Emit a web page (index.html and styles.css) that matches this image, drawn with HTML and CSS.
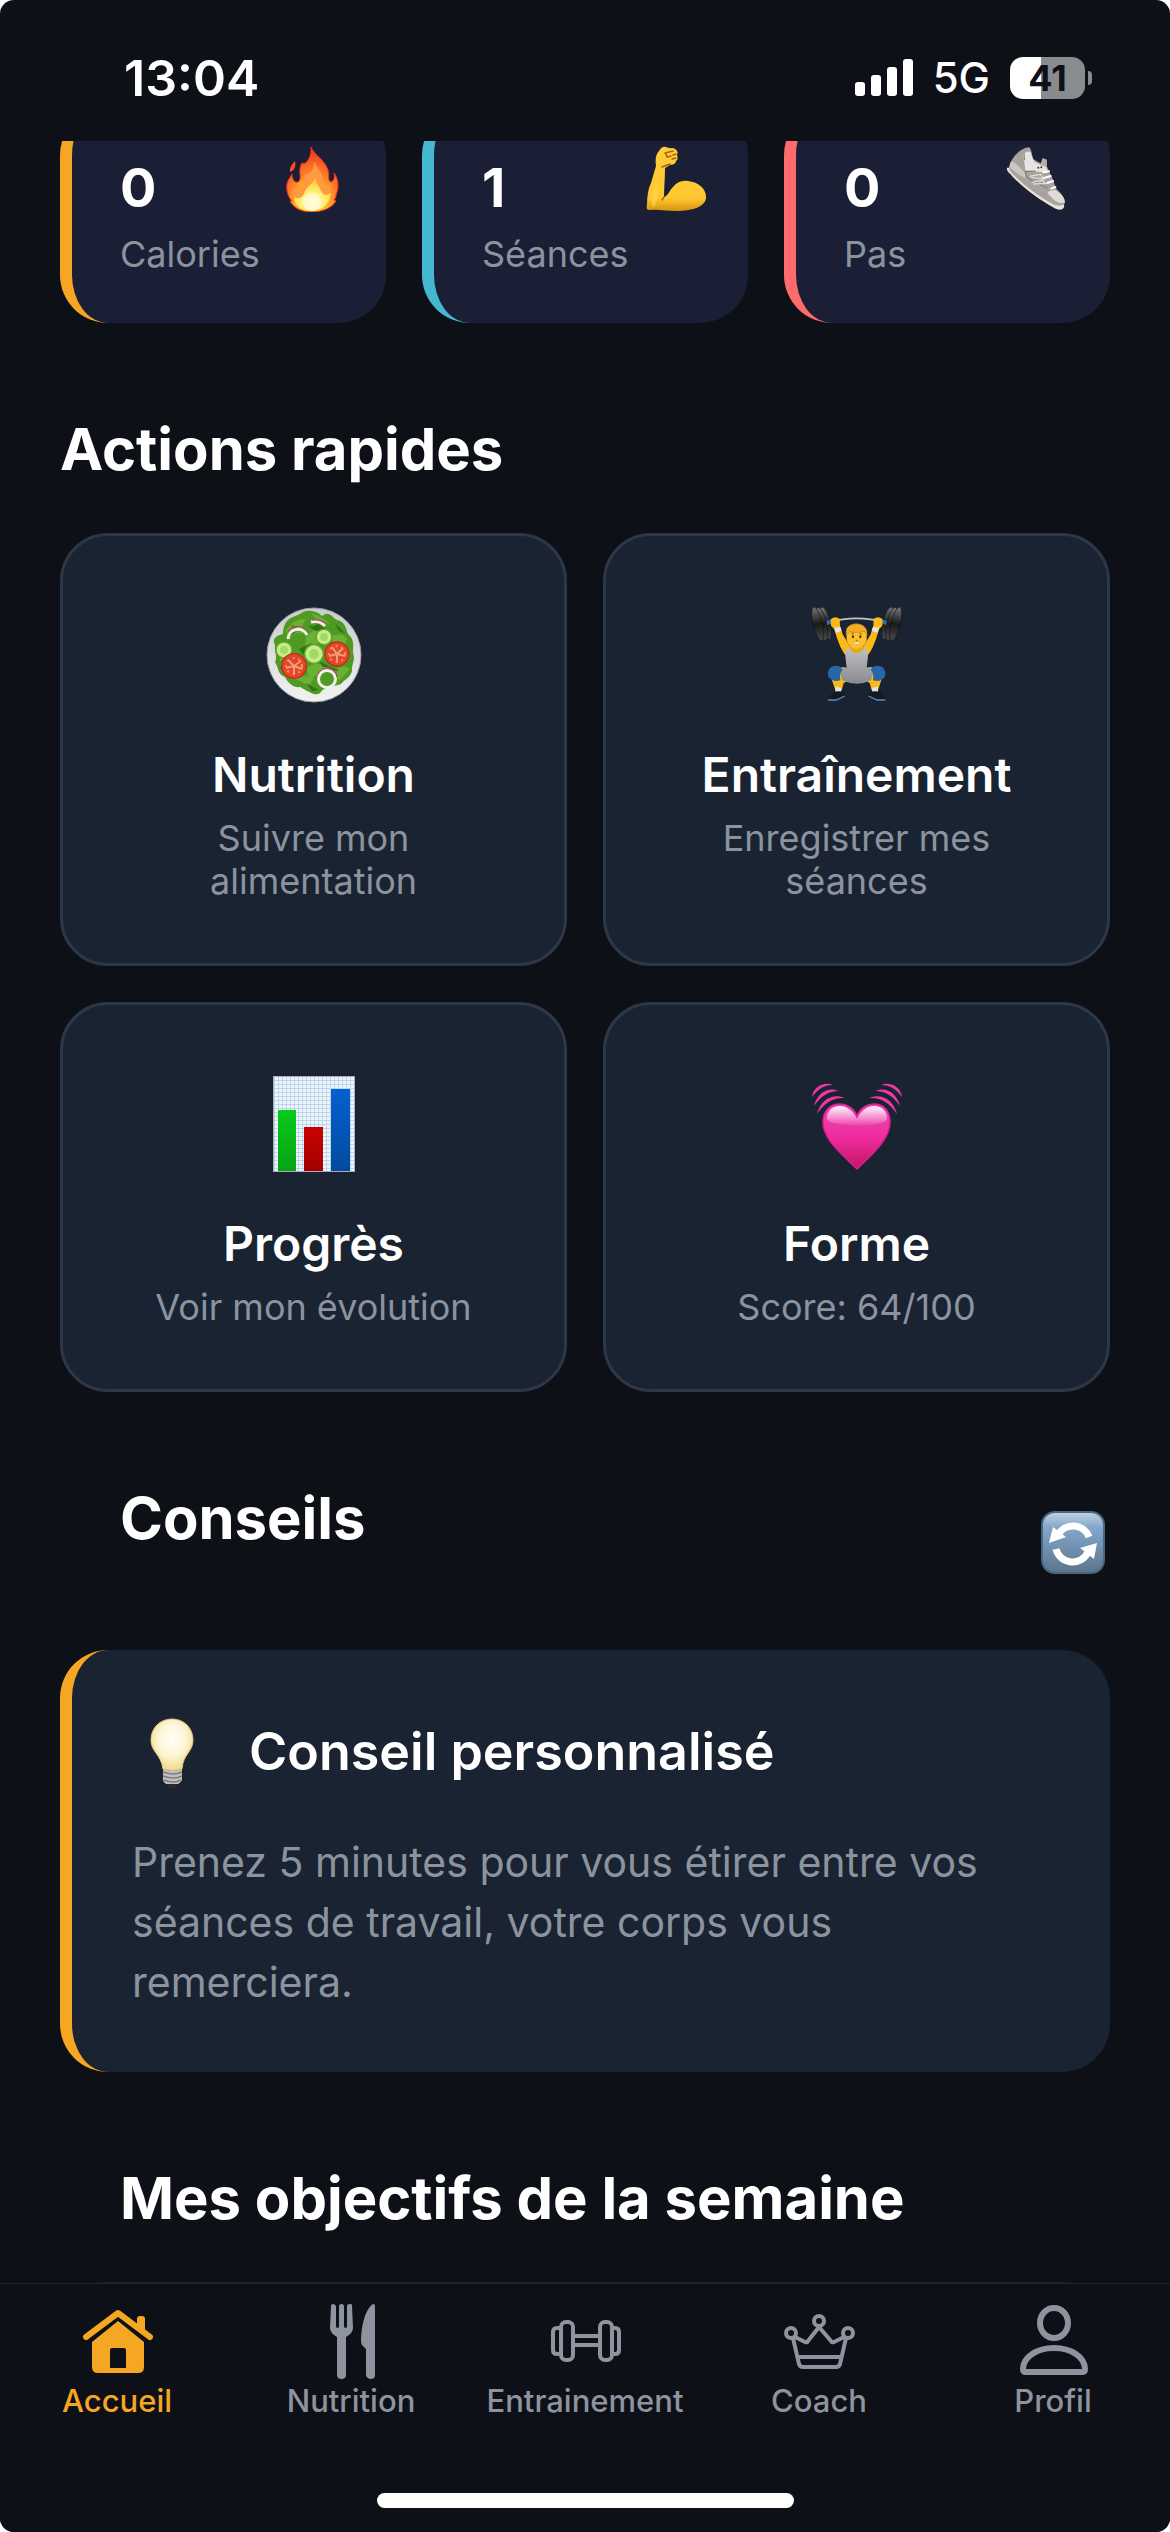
FILE: index.html
```html
<!DOCTYPE html>
<html lang="fr">
<head>
<meta charset="utf-8">
<meta name="viewport" content="width=device-width, initial-scale=1">
<title>Accueil</title>
<link rel="stylesheet" href="styles.css">
</head>
<body>
<div class="app">
  <header class="status">
    <time class="clock">13:04</time>
    <div class="indicators">
      <svg class="signal" viewBox="0 0 58 38" aria-hidden="true"><g fill="#fff"><rect x="0" y="23" width="10" height="14" rx="3"/><rect x="16" y="16" width="10" height="21" rx="3"/><rect x="32" y="8" width="10" height="29" rx="3"/><rect x="48" y="0" width="10" height="37" rx="3"/></g></svg>
      <span class="network">5G</span>
      <span class="battery"><span class="level">41</span><span class="nub"></span></span>
    </div>
  </header>

  <main class="scroll">
    <section class="stats">
      <article class="stat stat-calories">
        <div class="stat-top">
          <strong class="stat-value">0</strong>
          <svg class="stat-icon" viewBox="0 0 66 66" aria-hidden="true">
            <defs>
              <radialGradient id="fire" cx=".5" cy=".85" r=".8"><stop offset="0" stop-color="#ffe64a"/><stop offset=".35" stop-color="#ffb72d"/><stop offset=".6" stop-color="#ff7a2a"/><stop offset="1" stop-color="#f03a1e"/></radialGradient>
              <radialGradient id="fireCore" cx=".5" cy=".75" r=".6"><stop offset="0" stop-color="#fffde0"/><stop offset=".5" stop-color="#fff27a"/><stop offset="1" stop-color="#ffd23a"/></radialGradient>
            </defs>
            <path fill="url(#fire)" stroke="#f0321a" stroke-width="1" d="M31 1C34 9 45 14 48 24C50 30 47 34 51 36C54 35 55 31 54 27C58 32 59 40 57 46C56 49 56 52 54 54L56 55C52 62 42 66 32 66C20 66 13 61 10 55L12 55C8 51 6 44 7 38C8 33 11 31 12 28C12 33 14 37 18 36C23 33 17 24 22 17C25 18 26 17 28 14C31 10 31 6 31 1Z"/>
            <path fill="#ff4a22" d="M15 15C16 20 15 24 10 26C9 22 12 18 15 15Z"/>
            <path fill="#ff9a42" d="M34 15C37 23 44 27 43 37C43 42 48 42 51 38C52 49 46 60 32 62C20 60 13 52 14 43C17 44 22 43 24 38C25 32 24 29 28 28C33 26 34 21 34 15Z"/>
            <path fill="url(#fireCore)" d="M35 31C36 38 41 43 43 48C46 50 49 48 51 47C50 56 44 64 32 65C20 65 14 58 14 51C18 54 23 52 25 45C27 40 34 38 35 31Z"/>
            <ellipse cx="32" cy="56" rx="9" ry="9" fill="#fffbd8" opacity=".8"/>
          </svg>
        </div>
        <span class="stat-label">Calories</span>
      </article>
      <article class="stat stat-sessions">
        <div class="stat-top">
          <strong class="stat-value">1</strong>
          <svg class="stat-icon" viewBox="0 0 66 66" aria-hidden="true">
            <defs><linearGradient id="skin" x1="0" y1="0" x2="0" y2="1"><stop offset="0" stop-color="#ffcd3a"/><stop offset=".8" stop-color="#ffc830"/><stop offset="1" stop-color="#d8920f"/></linearGradient></defs>
            <path fill="url(#skin)" d="M21 1C24 0 27 3 30 2C34 2 37 6 35 9C36 11 36 14 34 15C34 18 30 19 28 19L23 22C23 32 22 42 22 51C26 50 27 45 31 41C35 36 40 34 46 35C57 36 64 43 64 51C64 60 52 65 34 65C24 65 16 63 8 64C5 64 4 63 5 59C5 51 6 43 9 37L14 20C13 13 14 8 17 5C18 3 19 2 21 1Z"/>
            <path fill="none" stroke="#a8620a" stroke-width="1.5" stroke-linecap="round" d="M23 7L31 5M24 8L25 11L29 10M31 9L34 8M30 13L34 12M20 21L28 18M22 51L20 54"/>
            <path fill="#ffdb59" d="M10 60C9 50 12 42 14 36C17 43 17 53 12 61Z" opacity=".5"/>
          </svg>
        </div>
        <span class="stat-label">Séances</span>
      </article>
      <article class="stat stat-steps">
        <div class="stat-top">
          <strong class="stat-value">0</strong>
          <svg class="stat-icon" viewBox="27 48 198 198" aria-hidden="true">
            <path fill="#222126" d="M35 116L36 129C68 168 120 208 172 235C184 243 203 245 206 236Z"/>
            <path fill="#e4e3df" d="M36 113C34 119 38 125 45 131C79 170 130 207 174 232C188 241 205 243 208 228L202 212L60 112Z"/>
            <path fill="#a9a29e" d="M46 99C53 82 74 55 101 52C110 55 109 70 115 88L137 100L144 86L155 89L156 110L175 151L182 174C198 190 211 204 210 219C205 229 184 229 172 221C129 199 75 158 43 121Z"/>
            <path fill="#e6e5e3" d="M84 73C92 66 108 57 109 75L118 95L136 104L154 111L158 129L140 126L91 122C90 105 86 92 84 73Z"/>
            <path fill="#cac6c3" d="M48 94L60 99L89 126L92 145C74 137 57 124 42 111Z"/>
            <path fill="#dedbd8" d="M158 189C160 180 173 183 181 180C198 191 210 202 209 217C190 226 169 204 158 189Z"/>
            <path fill="none" stroke="#77716e" stroke-width="3" d="M87 70L88 91M90 124L122 123M91 124C92 153 121 153 158 176"/>
            <path fill="none" stroke="#dedbd8" stroke-width="4" d="M103 139L137 133L145 147L109 142M110 157L142 151L151 160L115 162"/>
            <path fill="none" stroke="#fff" stroke-width="6" stroke-linecap="round" d="M145 127L162 124M147 144L167 138M157 159L174 153M169 176L181 171"/>
            <path fill="#b5aeaa" d="M137 101L143 84L155 89L155 113Z"/>
            <circle cx="130" cy="113" r="3" fill="#333"/><circle cx="139" cy="112" r="3" fill="#333"/>
          </svg>
        </div>
        <span class="stat-label">Pas</span>
      </article>
    </section>

    <section class="block">
      <h2 class="heading">Actions rapides</h2>
      <div class="actions">
        <a class="action" href="#nutrition">
          <svg class="action-icon" viewBox="0 0 96 96" aria-hidden="true">
            <defs><linearGradient id="plate" x1="0" y1="0" x2="0" y2="1"><stop offset="0" stop-color="#c9cccd"/><stop offset="1" stop-color="#f1f2f2"/></linearGradient></defs>
            <ellipse cx="48" cy="48" rx="47" ry="47" fill="url(#plate)" stroke="#9a9ea0"/>
            <path fill="#4f9a22" d="M34 7C40 1 52 4 56 9C63 3 66 10 71 13C79 14 80 22 82 27C89 33 87 39 87 46C90 53 85 58 86 64C84 71 78 73 75 77C68 80 59 78 54 86C49 90 42 84 34 80C27 81 22 76 19 70C11 67 13 61 9 55C12 50 8 45 9 38C5 31 12 28 17 27C17 19 20 12 27 10Z"/>
            <path fill="#69b033" d="M20 23Q28 11 40 12Q34 20 37 27Q29 23 23 33ZM40 30Q48 20 61 22Q54 29 57 35L39 40ZM66 29Q77 25 81 32Q78 37 80 43L67 35ZM13 47Q25 49 31 44L23 53L14 54ZM41 61Q50 53 60 60L54 66L42 73ZM72 61Q80 58 84 62L73 74Q69 69 72 61ZM28 71Q38 67 48 71L43 79ZM45 6Q55 9 65 17L50 12Z"/>
            <path fill="#2f7115" d="M23 17Q30 20 24 29L34 22ZM39 17Q45 22 52 17L65 25L50 24ZM69 16L80 27L73 24ZM33 42L47 35L39 41L40 51ZM60 58L74 64L66 63ZM14 60L19 69L17 59ZM40 76L52 83L46 84ZM53 54L65 60L57 60Z"/>
            <g fill="none" stroke="#f2f1e9" stroke-width="3"><path d="M22 32A10 10 0 0 1 41 28"/><path d="M45 15Q54 13 59 19"/><circle cx="61" cy="72" r="8.5"/></g>
            <g fill="none" stroke="#c04478" stroke-width="1.2"><path d="M22 25A11 9 0 0 1 40 22M46 13Q55 12 60 17"/><path d="M52 67A10 10 0 0 1 71 70"/></g>
            <g fill="#c9ec8a" stroke="#61a52b" stroke-width="1.5"><circle cx="48" cy="47" r="9.4"/><circle cx="18" cy="43" r="8"/><circle cx="58" cy="30" r="7.8"/></g>
            <g fill="#9edb66"><circle cx="48" cy="47" r="5"/><circle cx="18" cy="43" r="4"/><circle cx="58" cy="30" r="4"/></g>
            <g fill="#e2472c" stroke="#c22b18" stroke-width="1.3"><circle cx="28" cy="59" r="12.3"/><circle cx="71" cy="47" r="12"/></g>
            <g fill="none" stroke="#f39a4a" stroke-width="2" stroke-dasharray="2 4"><circle cx="28" cy="59" r="8"/><circle cx="71" cy="47" r="8"/></g>
            <path fill="none" stroke="#f59a7c" stroke-width="2" d="M28 59L22 53M28 59L35 54M28 59L28 68M28 59L20 61M28 59L36 62M71 47L66 40M71 47L77 41M71 47L71 56M71 47L63 49M71 47L79 49"/>
          </svg>
          <strong class="action-title">Nutrition</strong>
          <span class="action-text">Suivre mon alimentation</span>
        </a>
        <a class="action" href="#entrainement">
          <svg class="action-icon" viewBox="25 36 288 288" aria-hidden="true">
            <defs>
              <linearGradient id="disc" x1="0" y1="0" x2="0" y2="1"><stop offset="0" stop-color="#77787a"/><stop offset=".5" stop-color="#191a1c"/><stop offset="1" stop-color="#4a4b4d"/></linearGradient>
              <linearGradient id="suit" x1="0" y1="0" x2="0" y2="1"><stop offset="0" stop-color="#bfbfc3"/><stop offset=".6" stop-color="#a0a0a4"/><stop offset="1" stop-color="#8b8b8f"/></linearGradient>
            </defs>
            <path fill="none" stroke="#c2c5c9" stroke-width="5" d="M84 82Q168 58 252 82"/>
            <g fill="url(#disc)" stroke="#0c0d0e" stroke-width="1.5"><ellipse cx="75" cy="85" rx="15" ry="50" transform="rotate(-13 75 85)"/><ellipse cx="63" cy="87" rx="15" ry="51" transform="rotate(-13 63 87)"/><ellipse cx="51" cy="87" rx="14" ry="52" transform="rotate(-13 51 87)"/><ellipse cx="261" cy="85" rx="15" ry="50" transform="rotate(13 261 85)"/><ellipse cx="273" cy="87" rx="15" ry="51" transform="rotate(13 273 87)"/><ellipse cx="285" cy="87" rx="14" ry="52" transform="rotate(13 285 87)"/></g>
            <path fill="#2c6cb4" d="M77 77l14-3 2 12-14 4zM259 77l-14-3-2 12 14 4z"/>
            <path fill="#fbb917" d="M90 73Q103 61 117 71L118 93L126 118L151 160L140 187Q118 167 101 103L91 92ZM246 73Q233 61 219 71L218 93L210 118L185 160L196 187Q218 167 235 103L245 92Z"/>
            <path fill="#e3e5ea" d="M101 99l18-4 4 13-18 5zM235 99l-18-4-4 13 18 5z"/>
            <path fill="#fbb917" d="M98 223L124 217L143 218L142 257L129 264L123 285L104 285L92 250ZM238 223L212 217L193 218L194 257L207 264L213 285L232 285L244 250Z"/>
            <path fill="#e8a60e" d="M151 148H184L193 171Q169 183 143 171Z"/>
            <path fill="url(#suit)" d="M137 160L145 158Q168 190 191 158L199 160L202 184L198 219Q213 213 220 225L211 256Q169 277 125 256L116 225Q124 214 138 219L134 184Z"/>
            <path fill="#fcc02a" d="M138 112Q139 90 168 89Q197 90 198 112V135Q193 158 168 163Q143 158 138 135Z"/>
            <path fill="#f3ad25" stroke="#c98612" stroke-width="2" d="M137 122Q132 91 160 87Q182 84 194 99Q200 106 199 122L191 108Q165 116 147 109Z"/>
            <g fill="#3d2b12"><ellipse cx="157" cy="125" rx="3" ry="5"/><ellipse cx="179" cy="125" rx="3" ry="5"/></g>
            <path fill="none" stroke="#6c410a" stroke-width="2" d="M151 117l9-3M176 114l9 3M165 136h6"/><rect x="160" y="142" width="17" height="6" rx="3" fill="#fff" stroke="#9c6110"/>
            <path fill="#2767a6" d="M86 222Q98 207 118 215L126 224Q115 235 119 256Q97 263 84 247Q78 235 86 222ZM250 222Q238 207 218 215L210 224Q221 235 217 256Q239 263 252 247Q258 235 250 222Z"/>
            <path fill="#dfe1e8" d="M104 275l19 3-2 14h-17zM232 275l-19 3 2 14h17z"/>
            <path fill="#17181a" d="M101 290Q115 286 132 292L132 301L111 315H82L82 307ZM235 290Q221 286 204 292L204 301L225 315H254L254 307Z"/>
            <path fill="none" stroke="#4692d2" stroke-width="4" d="M82 315H107L132 303M254 315H229L204 303"/>
          </svg>
          <strong class="action-title">Entraînement</strong>
          <span class="action-text">Enregistrer mes séances</span>
        </a>
        <a class="action" href="#progres">
          <svg class="action-icon" viewBox="0 0 96 96" aria-hidden="true">
            <defs>
              <pattern id="grid" width="4" height="4" patternUnits="userSpaceOnUse"><path d="M0 .5H4M.5 0V4" stroke="#b4d8f2" stroke-width="1"/></pattern>
              <linearGradient id="g" x1="0" y1="0" x2="0" y2="1"><stop offset="0" stop-color="#06cb18"/><stop offset="1" stop-color="#08a318"/></linearGradient>
              <linearGradient id="r" x1="0" y1="0" x2="0" y2="1"><stop offset="0" stop-color="#c90202"/><stop offset="1" stop-color="#a30000"/></linearGradient>
              <linearGradient id="b" x1="0" y1="0" x2="0" y2="1"><stop offset="0" stop-color="#0560d0"/><stop offset="1" stop-color="#034a9e"/></linearGradient>
            </defs>
            <rect x="7" y="0" width="82" height="96" fill="#f4f4f5"/><rect x="7" y="0" width="82" height="96" fill="url(#grid)"/><rect x="7.500" y=".5" width="81" height="95" fill="none" stroke="#aaaeb5"/>
            <path fill="url(#g)" d="M12 34h18v61H12z"/><path fill="url(#r)" d="M38 51h19v44H38z"/><path fill="url(#b)" d="M65 13h19v82H65z"/>
          </svg>
          <strong class="action-title">Progrès</strong>
          <span class="action-text">Voir mon évolution</span>
        </a>
        <a class="action" href="#forme">
          <svg class="action-icon" viewBox="0 0 96 96" aria-hidden="true">
            <defs>
              <linearGradient id="heart" x1="0" y1="0" x2="0" y2="1"><stop offset="0" stop-color="#f04ab4"/><stop offset=".55" stop-color="#ee2a9c"/><stop offset="1" stop-color="#c1165f"/></linearGradient>
              <linearGradient id="shine" x1="0" y1="0" x2="0" y2="1"><stop offset="0" stop-color="#fff" stop-opacity=".95"/><stop offset="1" stop-color="#fff" stop-opacity="0"/></linearGradient>
            </defs>
            <path fill="url(#heart)" stroke="#df1d92" stroke-width="1.5" d="M48 40C51 32 58 28 65 28C75 28 81 35 81 46C81 64 62 79 48 93C34 79 14 64 14 46C14 35 21 28 31 28C38 28 45 32 48 40Z"/>
            <path fill="url(#shine)" d="M48 43C44 34 37 30 31 30C23 30 18 35 18 43C22 50 38 47 48 51C58 47 74 50 78 43C78 35 73 30 65 30C59 30 52 34 48 43Z"/>
            <g fill="#ef36a6"><path d="M3 21C4 11 15 5 24 9C15 9 9 13 3 21Z"/><path d="M5 30C8 17 19 10 30 15C20 15 12 20 5 30Z"/><path d="M8 38C12 23 24 17 36 22C25 21 16 26 8 38Z"/><path d="M93 21C92 11 81 5 72 9C81 9 87 13 93 21Z"/><path d="M91 30C88 17 77 10 66 15C76 15 84 20 91 30Z"/><path d="M88 38C84 23 72 17 60 22C71 21 80 26 88 38Z"/></g>
          </svg>
          <strong class="action-title">Forme</strong>
          <span class="action-text">Score: 64/100</span>
        </a>
      </div>
    </section>

    <section class="block">
      <div class="block-head">
        <h2 class="heading heading-inset">Conseils</h2>
        <button class="refresh" type="button" aria-label="Actualiser">
          <svg class="refresh-icon" viewBox="0 0 72 72" aria-hidden="true">
            <defs><linearGradient id="key" x1="0" y1="0" x2="0" y2="1"><stop offset="0" stop-color="#c3d4e4"/><stop offset=".25" stop-color="#83a7cc"/><stop offset=".6" stop-color="#7190af"/><stop offset="1" stop-color="#5d7489"/></linearGradient></defs>
            <rect x="4" y="6" width="62" height="61" rx="13" fill="url(#key)" stroke="#496783" stroke-width="2"/>
            <g fill="none" stroke="#fff" stroke-width="7"><path d="M20 29A17 17 0 0 1 51 31"/><path d="M18 43A17 17 0 0 0 50 46"/></g>
            <path fill="#fff" d="M15 21L11 37L28 31ZM59 37L56 53L42 42Z"/>
          </svg>
        </button>
      </div>
      <article class="tip">
        <div class="tip-head">
          <svg class="tip-icon" viewBox="0 0 80 84" aria-hidden="true">
            <defs><radialGradient id="bulb" cx=".5" cy=".4" r=".6"><stop offset="0" stop-color="#fffefa"/><stop offset=".55" stop-color="#fcf6d6"/><stop offset="1" stop-color="#f2d883"/></radialGradient></defs>
            <path fill="url(#bulb)" stroke="#e2c67d" d="M40 9C52 9 61 18 61 30C61 42 51 44 50 59Q40 62 31 59C29 44 19 42 19 30C19 18 28 9 40 9Z"/>
            <path fill="#c2c0bd" d="M31 59Q40 62 50 59V70Q48 75 40 75Q32 75 31 70Z"/>
            <path fill="none" stroke="#7f7d7b" stroke-width="1.500" d="M31 62Q42 66 50 62M31 66Q42 70 50 66M32 70Q42 74 49 70"/>
            <path fill="#2b2a29" d="M34 74H46L43 78H37Z"/>
          </svg>
          <h3 class="tip-title">Conseil personnalisé</h3>
        </div>
        <p class="tip-text">Prenez 5 minutes pour vous étirer entre vos séances de travail, votre corps vous remerciera.</p>
      </article>
    </section>

    <section class="block">
      <h2 class="heading heading-inset">Mes objectifs de la semaine</h2>
      <div class="goals"></div>
    </section>
  </main>

  <footer class="footer">
    <nav class="tabs">
      <a class="tab tab-active" href="#accueil" aria-current="page">
        <svg class="tab-icon" viewBox="0 0 84 84" aria-hidden="true"><path fill="none" stroke="currentColor" stroke-width="6" stroke-linecap="round" stroke-linejoin="round" d="M11 38L43 14L75 38"/><path fill="currentColor" d="M62 29V20Q62 17 65 17H67Q70 17 70 20V37ZM43 22L69 43V68Q69 74 63 74H23Q17 74 17 68V43ZM37 49Q35 49 35 51V69H51V51Q51 49 49 49Z" fill-rule="evenodd"/></svg>
        <span>Accueil</span>
      </a>
      <a class="tab" href="#nutrition">
        <svg class="tab-icon" viewBox="0 0 84 84" aria-hidden="true"><path fill="currentColor" d="M22 7Q22 5 24 5T27 7V27Q27 29 28.500 29T30 27V7Q30 5 32.500 5T35 7V27Q35 29 36.500 29T38 27V7Q38 5 41 5T43 7L44 29Q44 34 37 38V76Q37 80 32.500 80T28 76V38Q21 34 21 29ZM64 5Q66 5 66 7V76Q66 80 62 80T57 76V50L53 46Q52 44 52 42C52 28 56 10 64 5Z"/></svg>
        <span>Nutrition</span>
      </a>
      <a class="tab" href="#entrainement">
        <svg class="tab-icon" viewBox="0 0 84 84" aria-hidden="true"><g fill="none" stroke="currentColor" stroke-width="4"><rect x="18" y="23" width="12" height="38" rx="5"/><rect x="57" y="23" width="12" height="38" rx="5"/><path d="M18 29H14Q10 29 10 33V51Q10 55 14 55H18M69 29H72Q76 29 76 33V51Q76 55 72 55H69M30 37H57M30 46H57"/></g></svg>
        <span>Entrainement</span>
      </a>
      <a class="tab" href="#coach">
        <svg class="tab-icon" viewBox="0 0 84 84" aria-hidden="true"><g fill="none" stroke="currentColor" stroke-width="4" stroke-linejoin="round"><circle cx="14" cy="34" r="5"/><circle cx="42" cy="22" r="5"/><circle cx="71" cy="34" r="5"/><path d="M18 38L28 43Q30 44 31 42L42 28L54 42Q55 44 57 43L67 38M16 39L22 65Q23 68 26 68H59Q62 68 63 65L69 39M20 58H65"/></g></svg>
        <span>Coach</span>
      </a>
      <a class="tab" href="#profil">
        <svg class="tab-icon" viewBox="0 0 84 84" aria-hidden="true"><g fill="none" stroke="currentColor" stroke-width="6"><ellipse cx="43" cy="24" rx="14" ry="15"/><path d="M12 70C12 58 26 49 43 49S74 58 74 70Q74 73 71 73H15Q12 73 12 70Z"/></g></svg>
        <span>Profil</span>
      </a>
    </nav>
    <div class="home-indicator"></div>
  </footer>
</div>
</body>
</html>
```
FILE: styles.css
```css
:root {
  --bg: #0d1017;
  --card: #1a2332;
  --line: #2d3748;
  --muted: #8b949e;
  --accent: #f5a623;
}

* { box-sizing: border-box; }

body {
  margin: 0;
  background: #fff;
  color: #fff;
  font-family: Inter, "Liberation Sans", sans-serif;
}

h2, h3, p { margin: 0; }
a { color: inherit; text-decoration: none; }
svg { display: block; flex: none; }

.app {
  display: flex;
  flex-direction: column;
  height: 100vh;
  overflow: hidden;
  border-radius: 14px;
  background: var(--bg);
}

/* Status bar */
.status {
  display: flex;
  flex: none;
  align-items: center;
  justify-content: space-between;
  height: 141px;
  padding: 15px 78px 0 124px;
}
.clock { font-size: 50px; font-weight: 600; line-height: 60px; }
.indicators { display: flex; align-items: center; gap: 20px; }
.signal { width: 58px; height: 38px; }
.network { font-size: 42px; font-weight: 500; line-height: 48px; }
.battery { display: flex; align-items: center; gap: 3px; }
.level {
  width: 75px;
  border-radius: 13px;
  background: linear-gradient(90deg, #fff 41%, #8a8b8e 41%);
  color: var(--bg);
  font-size: 36px;
  font-weight: 700;
  line-height: 42px;
  text-align: center;
}
.nub { width: 4px; height: 14px; border-radius: 0 4px 4px 0; background: #8a8b8e; }

/* Scrolled content */
.scroll {
  flex: 1;
  min-height: 0;
  overflow: hidden;
  padding: 0 60px;
}
.stats {
  display: grid;
  grid-template-columns: repeat(3, 1fr);
  gap: 36px;
  margin-top: -34px;
}
.stat {
  padding: 39px 40px 47px 48px;
  border-left: 12px solid var(--accent);
  border-radius: 48px;
  background: #1a1f35;
}
.stat-sessions { border-left-color: #45b7d1; }
.stat-steps { border-left-color: #ff6b6b; }
.stat-top { display: flex; justify-content: space-between; height: 75px; }
.stat-value { align-self: flex-end; font-size: 54px; font-weight: 700; line-height: 66px; }
.stat-icon { width: 66px; height: 66px; }
.stat-label {
  display: block;
  margin-top: 11px;
  color: var(--muted);
  font-size: 36px;
  line-height: 44px;
}

.block { margin-top: 90px; }
.heading { margin-bottom: 48px; font-size: 58px; font-weight: 700; line-height: 72px; }
.heading-inset { padding-left: 60px; }

.actions { display: grid; grid-template-columns: repeat(2, 1fr); gap: 36px; }
.action {
  display: flex;
  flex-direction: column;
  align-items: center;
  padding: 71px 60px 60px;
  border: 3px solid var(--line);
  border-radius: 48px;
  background: var(--card);
  text-align: center;
}
.action-icon { width: 96px; height: 96px; }
.action-title { margin-top: 42px; font-size: 48px; font-weight: 600; line-height: 60px; }
.action-text {
  max-width: 320px;
  margin-top: 12px;
  color: var(--muted);
  font-size: 36px;
  line-height: 43px;
}

.block-head {
  display: flex;
  align-items: center;
  justify-content: space-between;
  margin-bottom: 48px;
}
.refresh { padding: 0; border: 0; background: none; }
.refresh-icon { width: 72px; height: 72px; }

.tip {
  padding: 60px;
  border-left: 12px solid var(--accent);
  border-radius: 48px;
  background: var(--card);
}
.tip-head { display: flex; align-items: center; gap: 37px; }
.tip-icon { width: 80px; height: 84px; }
.tip-title { font-size: 52px; font-weight: 600; line-height: 66px; }
.tip-text { margin-top: 38px; color: var(--muted); font-size: 41px; line-height: 60px; }

.goals { height: 360px; border-radius: 48px; background: var(--card); }

/* Tab bar */
.footer {
  flex: none;
  padding-bottom: 24px;
  border-top: 1px solid #20242b;
  background: var(--bg);
}
.tabs { display: grid; grid-template-columns: repeat(5, 1fr); padding: 15px 0 74px; }
.tab {
  display: flex;
  flex-direction: column;
  align-items: center;
  color: #8d94a0;
  font-size: 31px;
  font-weight: 500;
  line-height: 36px;
}
.tab-active { color: var(--accent); }
.tab-icon { width: 84px; height: 84px; }
.home-indicator {
  width: 417px;
  height: 15px;
  margin: 0 auto;
  border-radius: 8px;
  background: #fff;
}
```
